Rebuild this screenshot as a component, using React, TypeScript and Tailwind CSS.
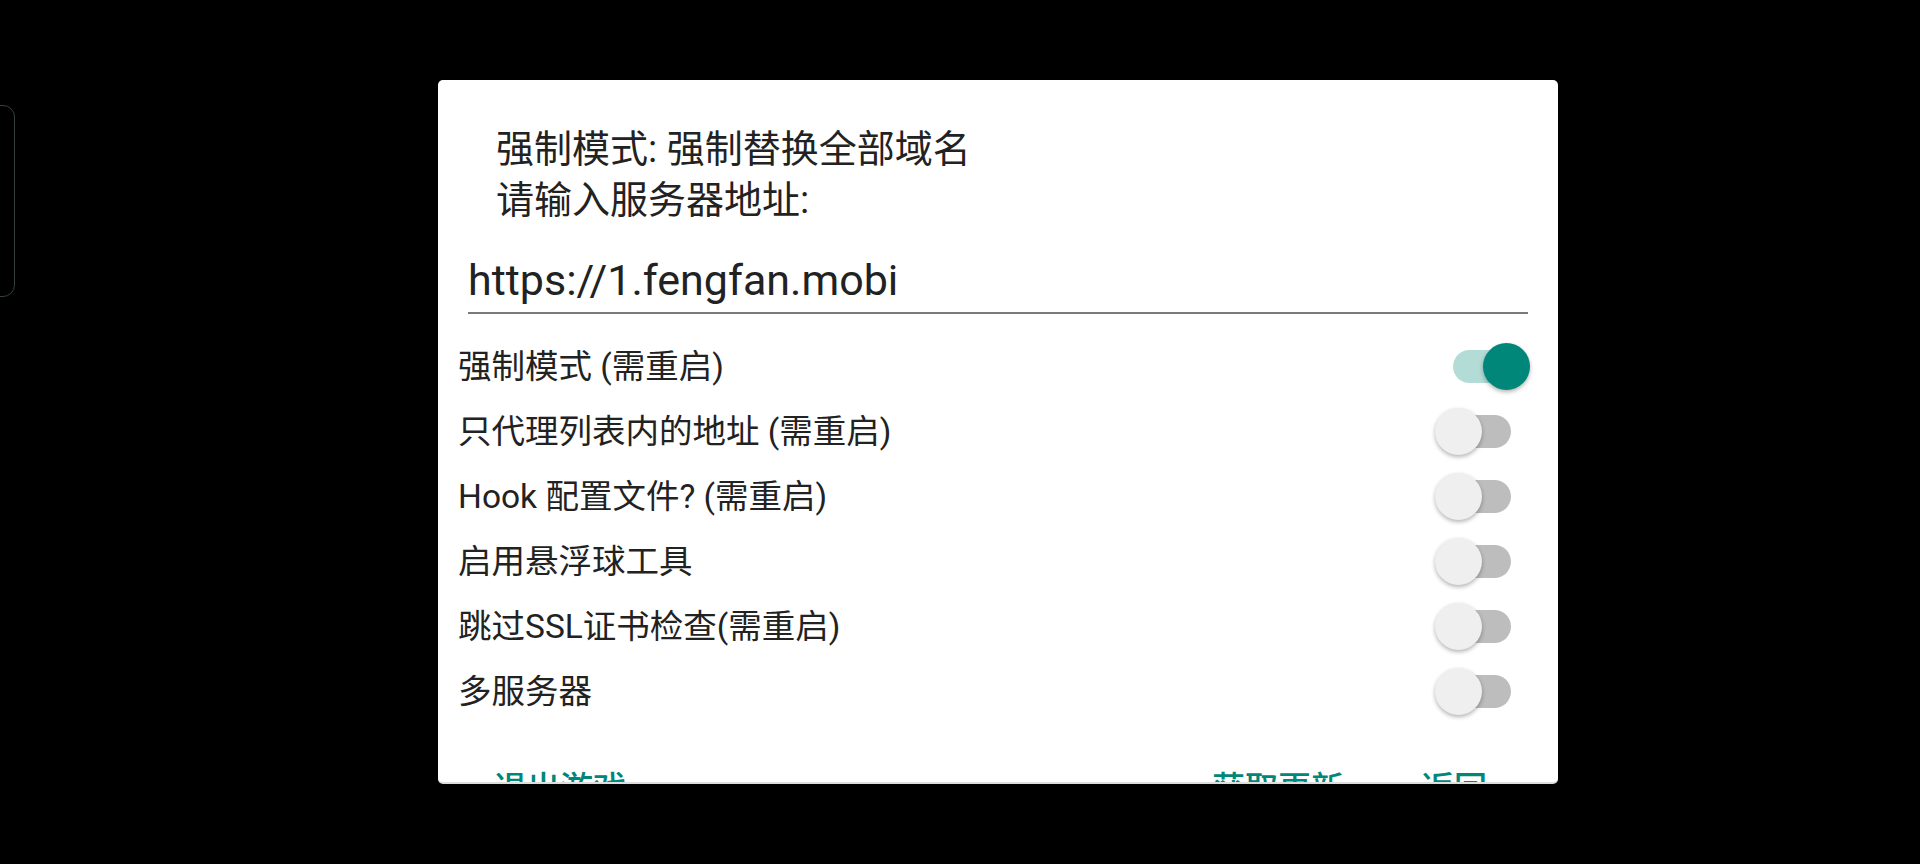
import React, { useState } from "react";

const font = { fontFamily: '"Roboto", "Noto Sans CJK SC", sans-serif' };

type ToggleProps = { on: boolean; onChange: () => void };

const Toggle = ({ on, onChange }: ToggleProps) => {
  return (
    <button type="button" onClick={onChange} className="relative w-[95px] h-[47px] shrink-0">
      {on ? (
        <>
          <span className="absolute left-[18px] top-[7px] w-[70px] h-[33px] rounded-full bg-[#b3dcd7]" />
          <span className="absolute left-[48px] top-0 w-[47px] h-[47px] rounded-full bg-[#00877a] shadow-[0_2px_4px_rgba(0,0,0,0.3)]" />
        </>
      ) : (
        <>
          <span className="absolute left-[5px] top-[7px] w-[71px] h-[33px] rounded-full bg-[#bdbdbd]" />
          <span className="absolute left-0 top-0 w-[47px] h-[47px] rounded-full bg-[#efefef] shadow-[0_2px_4px_rgba(0,0,0,0.3)]" />
        </>
      )}
    </button>
  );
};

const rows = [
  "强制模式 (需重启)",
  "只代理列表内的地址 (需重启)",
  "Hook 配置文件? (需重启)",
  "启用悬浮球工具",
  "跳过SSL证书检查(需重启)",
  "多服务器",
];

const App = () => {
  const [states, setStates] = useState([true, false, false, false, false, false]);
  const [url, setUrl] = useState("https://1.fengfan.mobi");

  const flip = (i: number) => {
    setStates((prev) => prev.map((v, j) => (j === i ? !v : v)));
  };

  return (
    <div className="w-full h-[864px] bg-black relative overflow-hidden" style={font}>
      {/* side handle */}
      <div className="absolute left-[-22px] top-[105px] w-[37px] h-[192px] rounded-[12px] border border-[#34423a]" />

      <div className="pt-[80px] pl-[438px]">
        {/* Dialog */}
        <div className="w-[1120px] h-[704px] bg-white rounded-[5px] overflow-hidden flex flex-col border-b-[2px] border-[#dddddd]">
          {/* Message */}
          <div className="pt-[44px] pl-[58px] text-[38px] leading-[51px] text-[#222222]">
            <p>强制模式: 强制替换全部域名</p>
            <p>请输入服务器地址:</p>
          </div>

          {/* Input */}
          <div className="mt-[26px] mx-[30px] pb-[4px] border-b-[2px] border-[#7a7a7a]">
            <input
              value={url}
              onChange={(e) => setUrl(e.target.value)}
              className="w-full h-[56px] text-[43px] leading-[56px] text-[#222222] outline-none bg-transparent"
              style={font}
            />
          </div>

          {/* Switch rows */}
          <div className="mt-[20px] flex flex-col">
            {rows.map((label, i) => (
              <div key={label} className="h-[65px] flex items-center justify-between pl-[20px] pr-[28px]">
                <span className="text-[33.5px] leading-[40px] text-[#222222]">{label}</span>
                <Toggle on={states[i]} onChange={() => flip(i)} />
              </div>
            ))}
          </div>

          {/* Buttons */}
          <div className="mt-[48px] flex items-start pl-[56px] pr-[71px] text-[33px] leading-[33px] font-medium text-[#00877a]">
            <button type="button">退出游戏</button>
            <div className="flex-1" />
            <button type="button">获取更新</button>
            <button type="button" className="ml-[77px]">返回</button>
          </div>
        </div>
      </div>
    </div>
  );
};

export default App;
